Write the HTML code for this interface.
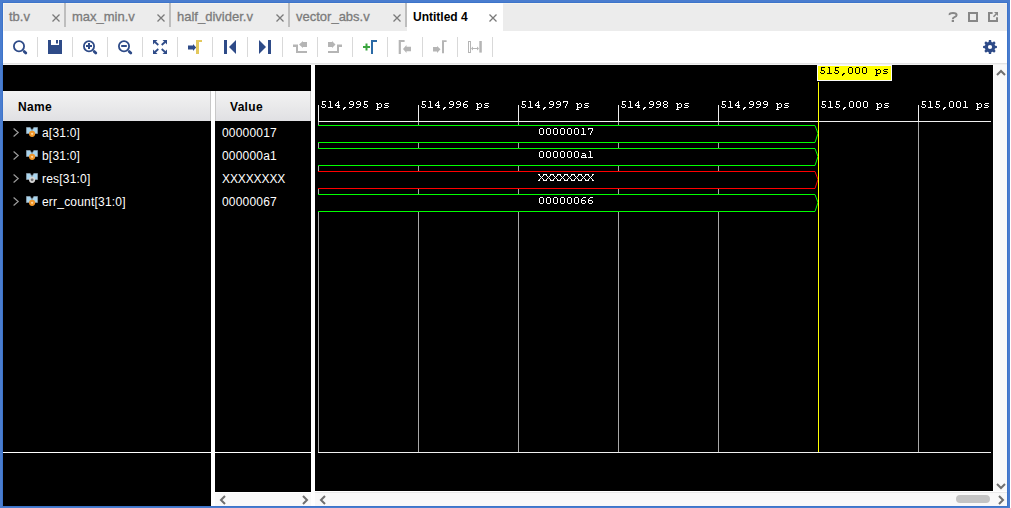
<!DOCTYPE html>
<html><head><meta charset="utf-8">
<style>
*{margin:0;padding:0;box-sizing:border-box}
html,body{width:1011px;height:508px;overflow:hidden;background:#fff}
body{position:relative;font-family:"Liberation Sans",sans-serif}
.a{position:absolute}
#frame{left:0;top:0;width:1010px;height:508px;background:#4a7dcf}
#tabbar{left:3px;top:3px;width:1004px;height:28px;background:#ececec}
.tab{position:absolute;top:3px;height:28px;font-size:13px;color:#7b7b7b;line-height:28px;white-space:pre;-webkit-text-stroke:0.3px #7b7b7b}
.tsep{position:absolute;top:3px;width:2px;height:24px;background:#bebebe}
.x{position:absolute;top:14px;width:8px;height:8px}
#toolbar{left:3px;top:31px;width:1004px;height:32px;background:#fff}
#tbline{left:3px;top:63px;width:1004px;height:2px;background:linear-gradient(#e4e4e4 50%,#f2f2f2 50%)}
.sep{position:absolute;top:37px;width:1px;height:20px;background:#d9d9d9}
.ic{position:absolute;top:40px;width:14px;height:14px}
.blk{position:absolute;background:#000}
.wsep{position:absolute;background:#fff}
.hdr{position:absolute;top:91px;height:30px;background:linear-gradient(#f3f3f3,#e0e0e3);font-weight:bold;font-size:12px;color:#000;line-height:33px;letter-spacing:0.3px}
.row{position:absolute;font-size:12px;color:#fff;white-space:pre;line-height:14px;letter-spacing:0.2px}
.mono{font-family:"Liberation Mono",monospace;font-size:11px;white-space:pre;line-height:14px;position:absolute;letter-spacing:0.4px}
</style></head><body>
<div class="a" id="frame"></div>
<div class="a" style="left:2px;top:2px;width:1006px;height:505px;background:#3d74ca"></div>
<div class="a" id="tabbar"></div>
<div class="a" style="left:3px;top:3px;width:1004px;height:1px;background:#f6f4ee"></div><div class="a" style="left:3px;top:3px;width:1px;height:60px;background:#f8f6f0"></div>
<div class="a" style="left:1010px;top:0;width:1px;height:508px;background:#fff"></div>

<!-- tabs -->
<div class="tab" style="left:9px">tb.v</div>
<svg class="x" style="left:52px" viewBox="0 0 8 8"><path d="M0.5 0.5L7.5 7.5M7.5 0.5L0.5 7.5" stroke="#7a7a7a" stroke-width="1.3"/></svg>
<div class="tsep" style="left:64px"></div>
<div class="tab" style="left:72px">max_min.v</div>
<svg class="x" style="left:157px" viewBox="0 0 8 8"><path d="M0.5 0.5L7.5 7.5M7.5 0.5L0.5 7.5" stroke="#7a7a7a" stroke-width="1.3"/></svg>
<div class="tsep" style="left:169px"></div>
<div class="tab" style="left:177px">half_divider.v</div>
<svg class="x" style="left:276px" viewBox="0 0 8 8"><path d="M0.5 0.5L7.5 7.5M7.5 0.5L0.5 7.5" stroke="#7a7a7a" stroke-width="1.3"/></svg>
<div class="tsep" style="left:288px"></div>
<div class="tab" style="left:296px">vector_abs.v</div>
<svg class="x" style="left:393px" viewBox="0 0 8 8"><path d="M0.5 0.5L7.5 7.5M7.5 0.5L0.5 7.5" stroke="#7a7a7a" stroke-width="1.3"/></svg>
<div class="tsep" style="left:405px"></div>
<div class="a" style="left:407px;top:3px;width:96px;height:28px;background:#fff"></div>
<div class="tab" style="left:413px;font-size:12px;font-weight:bold;color:#000;-webkit-text-stroke:0">Untitled 4</div>
<svg class="x" style="left:489px" viewBox="0 0 8 8"><path d="M0.5 0.5L7.5 7.5M7.5 0.5L0.5 7.5" stroke="#7a7a7a" stroke-width="1.3"/></svg>

<!-- right tab icons -->
<svg class="a" style="left:940px;top:0" width="70" height="30" viewBox="940 0 70 30">
<path d="M949.6 15Q949.3 12.9 953 12.9Q956.6 12.9 956.6 15Q956.6 16.3 954.5 17.2Q952.8 17.9 952.8 19.2" fill="none" stroke="#878787" stroke-width="2"/><rect x="951.7" y="20" width="2.3" height="2" fill="#878787"/>
<rect x="969" y="13" width="8" height="8" fill="none" stroke="#878787" stroke-width="2"/>
<path d="M992.6 13H989V21H997V17.2" fill="none" stroke="#878787" stroke-width="2"/><path d="M993.5 16.8L996.5 13.8" stroke="#878787" stroke-width="1.6"/><path d="M998 12L998 16L994 12Z" fill="#878787"/>
</svg>

<!-- toolbar -->
<div class="a" id="toolbar"></div>
<div class="a" id="tbline"></div>
<div class="sep" style="left:37px"></div><div class="sep" style="left:72px"></div><div class="sep" style="left:107px"></div><div class="sep" style="left:142px"></div><div class="sep" style="left:177px"></div><div class="sep" style="left:212px"></div><div class="sep" style="left:247px"></div><div class="sep" style="left:282px"></div><div class="sep" style="left:317px"></div><div class="sep" style="left:352px"></div><div class="sep" style="left:387px"></div><div class="sep" style="left:422px"></div><div class="sep" style="left:457px"></div><div class="sep" style="left:492px"></div>

<svg class="a" style="left:0;top:0" width="520" height="65" viewBox="0 0 520 65">
<!-- search -->
<circle cx="19" cy="46.2" r="5.1" fill="none" stroke="#2e4b88" stroke-width="1.8"/><path d="M24.2 51.4L25.8 53" stroke="#2e4b88" stroke-width="2.8" stroke-linecap="round"/>
<!-- save -->
<path d="M48 40H51V45H59V40H62V54H48Z" fill="#2e4b88"/><rect x="56" y="40" width="2" height="3.5" fill="#2e4b88"/>
<!-- zoom in -->
<circle cx="89" cy="46.2" r="5.1" fill="none" stroke="#2e4b88" stroke-width="1.8"/><path d="M94.2 51.4L95.8 53" stroke="#2e4b88" stroke-width="2.8" stroke-linecap="round"/>
<path d="M86 45H92V47H86Z M88 43H90V49H88Z" fill="#2e4b88"/>
<!-- zoom out -->
<circle cx="124" cy="46.2" r="5.1" fill="none" stroke="#2e4b88" stroke-width="1.8"/><path d="M129.2 51.4L130.8 53" stroke="#2e4b88" stroke-width="2.8" stroke-linecap="round"/>
<path d="M121.2 45H126.8V47H121.2Z" fill="#2e4b88"/>
<!-- fit -->
<g fill="#2e4b88">
<path d="M153 40H157.5L153 44.5Z"/><path d="M155 42L158.3 45" stroke="#2e4b88" stroke-width="1.8"/>
<path d="M167 40H162.5L167 44.5Z"/><path d="M165 42L161.7 45" stroke="#2e4b88" stroke-width="1.8"/>
<path d="M153 54H157.5L153 49.5Z"/><path d="M155 52L158.3 49" stroke="#2e4b88" stroke-width="1.8"/>
<path d="M167 54H162.5L167 49.5Z"/><path d="M165 52L161.7 49" stroke="#2e4b88" stroke-width="1.8"/>
</g>
<!-- go to cursor -->
<path d="M188 45.5H193V44L196.2 47.5L193 51V49.5H188Z" fill="#2e4b88"/>
<path d="M196 54V40H202V42H199V54Z" fill="#e3c85c"/>
<!-- go to start -->
<rect x="224" y="40" width="3" height="14" fill="#2e4b88"/><path d="M236 40V54L229 47Z" fill="#2e4b88"/>
<!-- go to end -->
<rect x="268" y="40" width="3" height="14" fill="#2e4b88"/><path d="M259 40V54L266 47Z" fill="#2e4b88"/>
<!-- prev transition -->
<path d="M293 44.5H298V51H307V53H296V47H293Z" fill="#b5b5b5"/><path d="M299 44.5L303 41V42H307V47H303V48Z" fill="#b5b5b5"/>
<!-- next transition -->
<path d="M342 44.5H337V51H328V53H339V47H342Z" fill="#b5b5b5"/><path d="M335.5 44.5L332 41V42H328V47H332V48Z" fill="#b5b5b5"/>
<!-- add marker -->
<path d="M363 46H370V48H363Z M365.5 43.5H367.5V50.5H365.5Z" fill="#3aa53e"/>
<path d="M371 54V40H377V42H373V54Z" fill="#2b6aa6"/>
<!-- prev marker -->
<path d="M398.7 54V40H404.6V42H400.9V54Z" fill="#b5b5b5"/><path d="M403 49L406.5 45V46.8H411V51.2H406.5V53Z" fill="#b5b5b5"/>
<!-- next marker -->
<path d="M442 53.2V40.2H446.6V42H444V53.2Z" fill="#b5b5b5"/><path d="M440.5 49.3L437 46V47H433V51.5H437V53Z" fill="#b5b5b5"/>
<!-- swap -->
<rect x="468.5" y="41.5" width="2" height="11" fill="none" stroke="#b5b5b5" stroke-width="1"/>
<rect x="479.3" y="41" width="2.5" height="11.6" fill="#b5b5b5"/>
<path d="M472 48.5H478" stroke="#b5b5b5" stroke-width="1"/><path d="M471 48.5L473 46.5V50.5Z M479 48.5L477 46.5V50.5Z" fill="#b5b5b5"/>
</svg>
<!-- gear -->
<svg class="a" style="left:978px;top:36px" width="24" height="22" viewBox="978 36 24 22"><g fill="#2e4b88"><circle cx="990" cy="47" r="5.2"/><path d="M993.00 45.30L996.90 45.90L996.90 48.10L993.00 48.70ZM993.32 47.92L995.66 51.10L994.10 52.66L990.92 50.32ZM991.70 50.00L991.10 53.90L988.90 53.90L988.30 50.00ZM989.08 50.32L985.90 52.66L984.34 51.10L986.68 47.92ZM987.00 48.70L983.10 48.10L983.10 45.90L987.00 45.30ZM986.68 46.08L984.34 42.90L985.90 41.34L989.08 43.68ZM988.30 44.00L988.90 40.10L991.10 40.10L991.70 44.00ZM990.92 43.68L994.10 41.34L995.66 42.90L993.32 46.08Z"/></g><circle cx="990" cy="47" r="2.1" fill="#fff"/></svg>

<!-- panels -->
<div class="blk" style="left:3px;top:65px;width:208px;height:441px"></div>
<div class="blk" style="left:211px;top:65px;width:4px;height:26px"></div><div class="wsep" style="left:211px;top:91px;width:4px;height:415px"></div>
<div class="blk" style="left:215px;top:65px;width:96px;height:427px"></div>
<div class="wsep" style="left:311px;top:65px;width:4px;height:441px"></div>
<div class="blk" style="left:315px;top:65px;width:678px;height:426px"></div>

<div class="hdr" style="left:3px;width:208px;border-right:1px solid #c8c8c8;padding-left:15px">Name</div>
<div class="hdr" style="left:215px;width:96px;border-left:1px solid #c8c8c8;border-right:1px solid #c8c8c8;padding-left:14px">Value</div>

<div class="a" style="left:3px;top:452px;width:208px;height:1px;background:#fff"></div>
<div class="a" style="left:215px;top:452px;width:96px;height:1px;background:#fff"></div>

<!-- wave -->
<svg class="a" style="left:0;top:0" width="1011" height="508" viewBox="0 0 1011 508" shape-rendering="crispEdges">
<line x1="318.5" y1="121" x2="318.5" y2="452" stroke="#a8a8a8"/>
<line x1="418.5" y1="121" x2="418.5" y2="452" stroke="#a8a8a8"/>
<line x1="518.5" y1="121" x2="518.5" y2="452" stroke="#a8a8a8"/>
<line x1="618.5" y1="121" x2="618.5" y2="452" stroke="#a8a8a8"/>
<line x1="718.5" y1="121" x2="718.5" y2="452" stroke="#a8a8a8"/>
<line x1="918.5" y1="121" x2="918.5" y2="452" stroke="#a8a8a8"/>
<line x1="318.5" y1="105" x2="318.5" y2="122" stroke="#f0f0f0"/>
<line x1="418.5" y1="105" x2="418.5" y2="122" stroke="#f0f0f0"/>
<line x1="518.5" y1="105" x2="518.5" y2="122" stroke="#f0f0f0"/>
<line x1="618.5" y1="105" x2="618.5" y2="122" stroke="#f0f0f0"/>
<line x1="718.5" y1="105" x2="718.5" y2="122" stroke="#f0f0f0"/>
<line x1="918.5" y1="105" x2="918.5" y2="122" stroke="#f0f0f0"/>
<line x1="318" y1="121.5" x2="991" y2="121.5" stroke="#f0f0f0"/>
<line x1="318" y1="452.5" x2="991" y2="452.5" stroke="#f0f0f0"/>
<path d="M318 125H815L818.5 133.5L815 143H318Z" fill="#000"/>
<path d="M318 125.5H815L818 133.5L815 142.5H318" fill="none" stroke="#00ff00" shape-rendering="auto"/>
<path d="M318 148H815L818.5 156.5L815 166H318Z" fill="#000"/>
<path d="M318 148.5H815L818 156.5L815 165.5H318" fill="none" stroke="#00ff00" shape-rendering="auto"/>
<path d="M318 171H815L818.5 179.5L815 189H318Z" fill="#000"/>
<path d="M318 171.5H815L818 179.5L815 188.5H318" fill="none" stroke="#ff0000" shape-rendering="auto"/>
<path d="M318 194H815L818.5 202.5L815 212H318Z" fill="#000"/>
<path d="M318 194.5H815L818 202.5L815 211.5H318" fill="none" stroke="#00ff00" shape-rendering="auto"/>
<line x1="818.5" y1="82" x2="818.5" y2="452" stroke="#ffff00"/>
</svg>
<div class="a" style="left:817px;top:65px;width:75px;height:16px;background:#ffff00;border:1px solid #fafafa"></div>
<svg class="a" style="left:0;top:0" width="1011" height="508" viewBox="0 0 1011 508" shape-rendering="crispEdges"><path fill="#fff" d="M322 101h4v1h-4zM322 102h1v1h-1zM322 103h1v1h-1zM322 104h3v1h-3zM325 105h1v1h-1zM321 106h1v1h-1zM325 106h1v1h-1zM322 107h3v1h-3zM329 101h2v1h-2zM330 102h1v1h-1zM330 103h1v1h-1zM330 104h1v1h-1zM330 105h1v1h-1zM330 106h1v1h-1zM328 107h5v1h-5zM338 101h1v1h-1zM337 102h2v1h-2zM336 103h1v1h-1zM338 103h1v1h-1zM335 104h1v1h-1zM338 104h1v1h-1zM335 105h5v1h-5zM338 106h1v1h-1zM337 107h3v1h-3zM344 107h2v1h-2zM343 108h2v1h-2zM343 109h1v1h-1zM350 101h3v1h-3zM349 102h1v1h-1zM353 102h1v1h-1zM349 103h1v1h-1zM353 103h1v1h-1zM350 104h4v1h-4zM353 105h1v1h-1zM352 106h1v1h-1zM349 107h3v1h-3zM357 101h3v1h-3zM356 102h1v1h-1zM360 102h1v1h-1zM356 103h1v1h-1zM360 103h1v1h-1zM357 104h4v1h-4zM360 105h1v1h-1zM359 106h1v1h-1zM356 107h3v1h-3zM364 101h4v1h-4zM364 102h1v1h-1zM364 103h1v1h-1zM364 104h3v1h-3zM367 105h1v1h-1zM363 106h1v1h-1zM367 106h1v1h-1zM364 107h3v1h-3zM376 103h2v1h-2zM379 103h2v1h-2zM377 104h2v1h-2zM381 104h1v1h-1zM377 105h1v1h-1zM381 105h1v1h-1zM377 106h1v1h-1zM381 106h1v1h-1zM377 107h4v1h-4zM377 108h1v1h-1zM376 109h3v1h-3zM385 103h4v1h-4zM384 104h1v1h-1zM385 105h3v1h-3zM388 106h1v1h-1zM384 107h4v1h-4zM422 101h4v1h-4zM422 102h1v1h-1zM422 103h1v1h-1zM422 104h3v1h-3zM425 105h1v1h-1zM421 106h1v1h-1zM425 106h1v1h-1zM422 107h3v1h-3zM429 101h2v1h-2zM430 102h1v1h-1zM430 103h1v1h-1zM430 104h1v1h-1zM430 105h1v1h-1zM430 106h1v1h-1zM428 107h5v1h-5zM438 101h1v1h-1zM437 102h2v1h-2zM436 103h1v1h-1zM438 103h1v1h-1zM435 104h1v1h-1zM438 104h1v1h-1zM435 105h5v1h-5zM438 106h1v1h-1zM437 107h3v1h-3zM444 107h2v1h-2zM443 108h2v1h-2zM443 109h1v1h-1zM450 101h3v1h-3zM449 102h1v1h-1zM453 102h1v1h-1zM449 103h1v1h-1zM453 103h1v1h-1zM450 104h4v1h-4zM453 105h1v1h-1zM452 106h1v1h-1zM449 107h3v1h-3zM457 101h3v1h-3zM456 102h1v1h-1zM460 102h1v1h-1zM456 103h1v1h-1zM460 103h1v1h-1zM457 104h4v1h-4zM460 105h1v1h-1zM459 106h1v1h-1zM456 107h3v1h-3zM465 101h3v1h-3zM464 102h1v1h-1zM463 103h1v1h-1zM463 104h4v1h-4zM463 105h1v1h-1zM467 105h1v1h-1zM463 106h1v1h-1zM467 106h1v1h-1zM464 107h3v1h-3zM476 103h2v1h-2zM479 103h2v1h-2zM477 104h2v1h-2zM481 104h1v1h-1zM477 105h1v1h-1zM481 105h1v1h-1zM477 106h1v1h-1zM481 106h1v1h-1zM477 107h4v1h-4zM477 108h1v1h-1zM476 109h3v1h-3zM485 103h4v1h-4zM484 104h1v1h-1zM485 105h3v1h-3zM488 106h1v1h-1zM484 107h4v1h-4zM522 101h4v1h-4zM522 102h1v1h-1zM522 103h1v1h-1zM522 104h3v1h-3zM525 105h1v1h-1zM521 106h1v1h-1zM525 106h1v1h-1zM522 107h3v1h-3zM529 101h2v1h-2zM530 102h1v1h-1zM530 103h1v1h-1zM530 104h1v1h-1zM530 105h1v1h-1zM530 106h1v1h-1zM528 107h5v1h-5zM538 101h1v1h-1zM537 102h2v1h-2zM536 103h1v1h-1zM538 103h1v1h-1zM535 104h1v1h-1zM538 104h1v1h-1zM535 105h5v1h-5zM538 106h1v1h-1zM537 107h3v1h-3zM544 107h2v1h-2zM543 108h2v1h-2zM543 109h1v1h-1zM550 101h3v1h-3zM549 102h1v1h-1zM553 102h1v1h-1zM549 103h1v1h-1zM553 103h1v1h-1zM550 104h4v1h-4zM553 105h1v1h-1zM552 106h1v1h-1zM549 107h3v1h-3zM557 101h3v1h-3zM556 102h1v1h-1zM560 102h1v1h-1zM556 103h1v1h-1zM560 103h1v1h-1zM557 104h4v1h-4zM560 105h1v1h-1zM559 106h1v1h-1zM556 107h3v1h-3zM563 101h5v1h-5zM563 102h1v1h-1zM567 102h1v1h-1zM567 103h1v1h-1zM566 104h1v1h-1zM566 105h1v1h-1zM565 106h1v1h-1zM565 107h1v1h-1zM576 103h2v1h-2zM579 103h2v1h-2zM577 104h2v1h-2zM581 104h1v1h-1zM577 105h1v1h-1zM581 105h1v1h-1zM577 106h1v1h-1zM581 106h1v1h-1zM577 107h4v1h-4zM577 108h1v1h-1zM576 109h3v1h-3zM585 103h4v1h-4zM584 104h1v1h-1zM585 105h3v1h-3zM588 106h1v1h-1zM584 107h4v1h-4zM622 101h4v1h-4zM622 102h1v1h-1zM622 103h1v1h-1zM622 104h3v1h-3zM625 105h1v1h-1zM621 106h1v1h-1zM625 106h1v1h-1zM622 107h3v1h-3zM629 101h2v1h-2zM630 102h1v1h-1zM630 103h1v1h-1zM630 104h1v1h-1zM630 105h1v1h-1zM630 106h1v1h-1zM628 107h5v1h-5zM638 101h1v1h-1zM637 102h2v1h-2zM636 103h1v1h-1zM638 103h1v1h-1zM635 104h1v1h-1zM638 104h1v1h-1zM635 105h5v1h-5zM638 106h1v1h-1zM637 107h3v1h-3zM644 107h2v1h-2zM643 108h2v1h-2zM643 109h1v1h-1zM650 101h3v1h-3zM649 102h1v1h-1zM653 102h1v1h-1zM649 103h1v1h-1zM653 103h1v1h-1zM650 104h4v1h-4zM653 105h1v1h-1zM652 106h1v1h-1zM649 107h3v1h-3zM657 101h3v1h-3zM656 102h1v1h-1zM660 102h1v1h-1zM656 103h1v1h-1zM660 103h1v1h-1zM657 104h4v1h-4zM660 105h1v1h-1zM659 106h1v1h-1zM656 107h3v1h-3zM664 101h3v1h-3zM663 102h1v1h-1zM667 102h1v1h-1zM663 103h1v1h-1zM667 103h1v1h-1zM664 104h3v1h-3zM663 105h1v1h-1zM667 105h1v1h-1zM663 106h1v1h-1zM667 106h1v1h-1zM664 107h3v1h-3zM676 103h2v1h-2zM679 103h2v1h-2zM677 104h2v1h-2zM681 104h1v1h-1zM677 105h1v1h-1zM681 105h1v1h-1zM677 106h1v1h-1zM681 106h1v1h-1zM677 107h4v1h-4zM677 108h1v1h-1zM676 109h3v1h-3zM685 103h4v1h-4zM684 104h1v1h-1zM685 105h3v1h-3zM688 106h1v1h-1zM684 107h4v1h-4zM722 101h4v1h-4zM722 102h1v1h-1zM722 103h1v1h-1zM722 104h3v1h-3zM725 105h1v1h-1zM721 106h1v1h-1zM725 106h1v1h-1zM722 107h3v1h-3zM729 101h2v1h-2zM730 102h1v1h-1zM730 103h1v1h-1zM730 104h1v1h-1zM730 105h1v1h-1zM730 106h1v1h-1zM728 107h5v1h-5zM738 101h1v1h-1zM737 102h2v1h-2zM736 103h1v1h-1zM738 103h1v1h-1zM735 104h1v1h-1zM738 104h1v1h-1zM735 105h5v1h-5zM738 106h1v1h-1zM737 107h3v1h-3zM744 107h2v1h-2zM743 108h2v1h-2zM743 109h1v1h-1zM750 101h3v1h-3zM749 102h1v1h-1zM753 102h1v1h-1zM749 103h1v1h-1zM753 103h1v1h-1zM750 104h4v1h-4zM753 105h1v1h-1zM752 106h1v1h-1zM749 107h3v1h-3zM757 101h3v1h-3zM756 102h1v1h-1zM760 102h1v1h-1zM756 103h1v1h-1zM760 103h1v1h-1zM757 104h4v1h-4zM760 105h1v1h-1zM759 106h1v1h-1zM756 107h3v1h-3zM764 101h3v1h-3zM763 102h1v1h-1zM767 102h1v1h-1zM763 103h1v1h-1zM767 103h1v1h-1zM764 104h4v1h-4zM767 105h1v1h-1zM766 106h1v1h-1zM763 107h3v1h-3zM776 103h2v1h-2zM779 103h2v1h-2zM777 104h2v1h-2zM781 104h1v1h-1zM777 105h1v1h-1zM781 105h1v1h-1zM777 106h1v1h-1zM781 106h1v1h-1zM777 107h4v1h-4zM777 108h1v1h-1zM776 109h3v1h-3zM785 103h4v1h-4zM784 104h1v1h-1zM785 105h3v1h-3zM788 106h1v1h-1zM784 107h4v1h-4zM822 101h4v1h-4zM822 102h1v1h-1zM822 103h1v1h-1zM822 104h3v1h-3zM825 105h1v1h-1zM821 106h1v1h-1zM825 106h1v1h-1zM822 107h3v1h-3zM829 101h2v1h-2zM830 102h1v1h-1zM830 103h1v1h-1zM830 104h1v1h-1zM830 105h1v1h-1zM830 106h1v1h-1zM828 107h5v1h-5zM836 101h4v1h-4zM836 102h1v1h-1zM836 103h1v1h-1zM836 104h3v1h-3zM839 105h1v1h-1zM835 106h1v1h-1zM839 106h1v1h-1zM836 107h3v1h-3zM844 107h2v1h-2zM843 108h2v1h-2zM843 109h1v1h-1zM850 101h3v1h-3zM849 102h1v1h-1zM853 102h1v1h-1zM849 103h1v1h-1zM853 103h1v1h-1zM849 104h1v1h-1zM853 104h1v1h-1zM849 105h1v1h-1zM853 105h1v1h-1zM849 106h1v1h-1zM853 106h1v1h-1zM850 107h3v1h-3zM857 101h3v1h-3zM856 102h1v1h-1zM860 102h1v1h-1zM856 103h1v1h-1zM860 103h1v1h-1zM856 104h1v1h-1zM860 104h1v1h-1zM856 105h1v1h-1zM860 105h1v1h-1zM856 106h1v1h-1zM860 106h1v1h-1zM857 107h3v1h-3zM864 101h3v1h-3zM863 102h1v1h-1zM867 102h1v1h-1zM863 103h1v1h-1zM867 103h1v1h-1zM863 104h1v1h-1zM867 104h1v1h-1zM863 105h1v1h-1zM867 105h1v1h-1zM863 106h1v1h-1zM867 106h1v1h-1zM864 107h3v1h-3zM876 103h2v1h-2zM879 103h2v1h-2zM877 104h2v1h-2zM881 104h1v1h-1zM877 105h1v1h-1zM881 105h1v1h-1zM877 106h1v1h-1zM881 106h1v1h-1zM877 107h4v1h-4zM877 108h1v1h-1zM876 109h3v1h-3zM885 103h4v1h-4zM884 104h1v1h-1zM885 105h3v1h-3zM888 106h1v1h-1zM884 107h4v1h-4zM922 101h4v1h-4zM922 102h1v1h-1zM922 103h1v1h-1zM922 104h3v1h-3zM925 105h1v1h-1zM921 106h1v1h-1zM925 106h1v1h-1zM922 107h3v1h-3zM929 101h2v1h-2zM930 102h1v1h-1zM930 103h1v1h-1zM930 104h1v1h-1zM930 105h1v1h-1zM930 106h1v1h-1zM928 107h5v1h-5zM936 101h4v1h-4zM936 102h1v1h-1zM936 103h1v1h-1zM936 104h3v1h-3zM939 105h1v1h-1zM935 106h1v1h-1zM939 106h1v1h-1zM936 107h3v1h-3zM944 107h2v1h-2zM943 108h2v1h-2zM943 109h1v1h-1zM950 101h3v1h-3zM949 102h1v1h-1zM953 102h1v1h-1zM949 103h1v1h-1zM953 103h1v1h-1zM949 104h1v1h-1zM953 104h1v1h-1zM949 105h1v1h-1zM953 105h1v1h-1zM949 106h1v1h-1zM953 106h1v1h-1zM950 107h3v1h-3zM957 101h3v1h-3zM956 102h1v1h-1zM960 102h1v1h-1zM956 103h1v1h-1zM960 103h1v1h-1zM956 104h1v1h-1zM960 104h1v1h-1zM956 105h1v1h-1zM960 105h1v1h-1zM956 106h1v1h-1zM960 106h1v1h-1zM957 107h3v1h-3zM964 101h2v1h-2zM965 102h1v1h-1zM965 103h1v1h-1zM965 104h1v1h-1zM965 105h1v1h-1zM965 106h1v1h-1zM963 107h5v1h-5zM976 103h2v1h-2zM979 103h2v1h-2zM977 104h2v1h-2zM981 104h1v1h-1zM977 105h1v1h-1zM981 105h1v1h-1zM977 106h1v1h-1zM981 106h1v1h-1zM977 107h4v1h-4zM977 108h1v1h-1zM976 109h3v1h-3zM985 103h4v1h-4zM984 104h1v1h-1zM985 105h3v1h-3zM988 106h1v1h-1zM984 107h4v1h-4zM540 128h3v1h-3zM539 129h1v1h-1zM543 129h1v1h-1zM539 130h1v1h-1zM543 130h1v1h-1zM539 131h1v1h-1zM543 131h1v1h-1zM539 132h1v1h-1zM543 132h1v1h-1zM539 133h1v1h-1zM543 133h1v1h-1zM540 134h3v1h-3zM547 128h3v1h-3zM546 129h1v1h-1zM550 129h1v1h-1zM546 130h1v1h-1zM550 130h1v1h-1zM546 131h1v1h-1zM550 131h1v1h-1zM546 132h1v1h-1zM550 132h1v1h-1zM546 133h1v1h-1zM550 133h1v1h-1zM547 134h3v1h-3zM554 128h3v1h-3zM553 129h1v1h-1zM557 129h1v1h-1zM553 130h1v1h-1zM557 130h1v1h-1zM553 131h1v1h-1zM557 131h1v1h-1zM553 132h1v1h-1zM557 132h1v1h-1zM553 133h1v1h-1zM557 133h1v1h-1zM554 134h3v1h-3zM561 128h3v1h-3zM560 129h1v1h-1zM564 129h1v1h-1zM560 130h1v1h-1zM564 130h1v1h-1zM560 131h1v1h-1zM564 131h1v1h-1zM560 132h1v1h-1zM564 132h1v1h-1zM560 133h1v1h-1zM564 133h1v1h-1zM561 134h3v1h-3zM568 128h3v1h-3zM567 129h1v1h-1zM571 129h1v1h-1zM567 130h1v1h-1zM571 130h1v1h-1zM567 131h1v1h-1zM571 131h1v1h-1zM567 132h1v1h-1zM571 132h1v1h-1zM567 133h1v1h-1zM571 133h1v1h-1zM568 134h3v1h-3zM575 128h3v1h-3zM574 129h1v1h-1zM578 129h1v1h-1zM574 130h1v1h-1zM578 130h1v1h-1zM574 131h1v1h-1zM578 131h1v1h-1zM574 132h1v1h-1zM578 132h1v1h-1zM574 133h1v1h-1zM578 133h1v1h-1zM575 134h3v1h-3zM582 128h2v1h-2zM583 129h1v1h-1zM583 130h1v1h-1zM583 131h1v1h-1zM583 132h1v1h-1zM583 133h1v1h-1zM581 134h5v1h-5zM588 128h5v1h-5zM588 129h1v1h-1zM592 129h1v1h-1zM592 130h1v1h-1zM591 131h1v1h-1zM591 132h1v1h-1zM590 133h1v1h-1zM590 134h1v1h-1zM540 151h3v1h-3zM539 152h1v1h-1zM543 152h1v1h-1zM539 153h1v1h-1zM543 153h1v1h-1zM539 154h1v1h-1zM543 154h1v1h-1zM539 155h1v1h-1zM543 155h1v1h-1zM539 156h1v1h-1zM543 156h1v1h-1zM540 157h3v1h-3zM547 151h3v1h-3zM546 152h1v1h-1zM550 152h1v1h-1zM546 153h1v1h-1zM550 153h1v1h-1zM546 154h1v1h-1zM550 154h1v1h-1zM546 155h1v1h-1zM550 155h1v1h-1zM546 156h1v1h-1zM550 156h1v1h-1zM547 157h3v1h-3zM554 151h3v1h-3zM553 152h1v1h-1zM557 152h1v1h-1zM553 153h1v1h-1zM557 153h1v1h-1zM553 154h1v1h-1zM557 154h1v1h-1zM553 155h1v1h-1zM557 155h1v1h-1zM553 156h1v1h-1zM557 156h1v1h-1zM554 157h3v1h-3zM561 151h3v1h-3zM560 152h1v1h-1zM564 152h1v1h-1zM560 153h1v1h-1zM564 153h1v1h-1zM560 154h1v1h-1zM564 154h1v1h-1zM560 155h1v1h-1zM564 155h1v1h-1zM560 156h1v1h-1zM564 156h1v1h-1zM561 157h3v1h-3zM568 151h3v1h-3zM567 152h1v1h-1zM571 152h1v1h-1zM567 153h1v1h-1zM571 153h1v1h-1zM567 154h1v1h-1zM571 154h1v1h-1zM567 155h1v1h-1zM571 155h1v1h-1zM567 156h1v1h-1zM571 156h1v1h-1zM568 157h3v1h-3zM575 151h3v1h-3zM574 152h1v1h-1zM578 152h1v1h-1zM574 153h1v1h-1zM578 153h1v1h-1zM574 154h1v1h-1zM578 154h1v1h-1zM574 155h1v1h-1zM578 155h1v1h-1zM574 156h1v1h-1zM578 156h1v1h-1zM575 157h3v1h-3zM582 153h3v1h-3zM585 154h1v1h-1zM582 155h4v1h-4zM581 156h1v1h-1zM585 156h1v1h-1zM581 157h6v1h-6zM589 151h2v1h-2zM590 152h1v1h-1zM590 153h1v1h-1zM590 154h1v1h-1zM590 155h1v1h-1zM590 156h1v1h-1zM588 157h5v1h-5zM538 174h2v1h-2zM543 174h2v1h-2zM539 175h1v1h-1zM543 175h1v1h-1zM540 176h1v1h-1zM542 176h1v1h-1zM541 177h1v1h-1zM540 178h1v1h-1zM542 178h1v1h-1zM539 179h1v1h-1zM543 179h1v1h-1zM538 180h2v1h-2zM543 180h2v1h-2zM545 174h2v1h-2zM550 174h2v1h-2zM546 175h1v1h-1zM550 175h1v1h-1zM547 176h1v1h-1zM549 176h1v1h-1zM548 177h1v1h-1zM547 178h1v1h-1zM549 178h1v1h-1zM546 179h1v1h-1zM550 179h1v1h-1zM545 180h2v1h-2zM550 180h2v1h-2zM552 174h2v1h-2zM557 174h2v1h-2zM553 175h1v1h-1zM557 175h1v1h-1zM554 176h1v1h-1zM556 176h1v1h-1zM555 177h1v1h-1zM554 178h1v1h-1zM556 178h1v1h-1zM553 179h1v1h-1zM557 179h1v1h-1zM552 180h2v1h-2zM557 180h2v1h-2zM559 174h2v1h-2zM564 174h2v1h-2zM560 175h1v1h-1zM564 175h1v1h-1zM561 176h1v1h-1zM563 176h1v1h-1zM562 177h1v1h-1zM561 178h1v1h-1zM563 178h1v1h-1zM560 179h1v1h-1zM564 179h1v1h-1zM559 180h2v1h-2zM564 180h2v1h-2zM566 174h2v1h-2zM571 174h2v1h-2zM567 175h1v1h-1zM571 175h1v1h-1zM568 176h1v1h-1zM570 176h1v1h-1zM569 177h1v1h-1zM568 178h1v1h-1zM570 178h1v1h-1zM567 179h1v1h-1zM571 179h1v1h-1zM566 180h2v1h-2zM571 180h2v1h-2zM573 174h2v1h-2zM578 174h2v1h-2zM574 175h1v1h-1zM578 175h1v1h-1zM575 176h1v1h-1zM577 176h1v1h-1zM576 177h1v1h-1zM575 178h1v1h-1zM577 178h1v1h-1zM574 179h1v1h-1zM578 179h1v1h-1zM573 180h2v1h-2zM578 180h2v1h-2zM580 174h2v1h-2zM585 174h2v1h-2zM581 175h1v1h-1zM585 175h1v1h-1zM582 176h1v1h-1zM584 176h1v1h-1zM583 177h1v1h-1zM582 178h1v1h-1zM584 178h1v1h-1zM581 179h1v1h-1zM585 179h1v1h-1zM580 180h2v1h-2zM585 180h2v1h-2zM587 174h2v1h-2zM592 174h2v1h-2zM588 175h1v1h-1zM592 175h1v1h-1zM589 176h1v1h-1zM591 176h1v1h-1zM590 177h1v1h-1zM589 178h1v1h-1zM591 178h1v1h-1zM588 179h1v1h-1zM592 179h1v1h-1zM587 180h2v1h-2zM592 180h2v1h-2zM540 197h3v1h-3zM539 198h1v1h-1zM543 198h1v1h-1zM539 199h1v1h-1zM543 199h1v1h-1zM539 200h1v1h-1zM543 200h1v1h-1zM539 201h1v1h-1zM543 201h1v1h-1zM539 202h1v1h-1zM543 202h1v1h-1zM540 203h3v1h-3zM547 197h3v1h-3zM546 198h1v1h-1zM550 198h1v1h-1zM546 199h1v1h-1zM550 199h1v1h-1zM546 200h1v1h-1zM550 200h1v1h-1zM546 201h1v1h-1zM550 201h1v1h-1zM546 202h1v1h-1zM550 202h1v1h-1zM547 203h3v1h-3zM554 197h3v1h-3zM553 198h1v1h-1zM557 198h1v1h-1zM553 199h1v1h-1zM557 199h1v1h-1zM553 200h1v1h-1zM557 200h1v1h-1zM553 201h1v1h-1zM557 201h1v1h-1zM553 202h1v1h-1zM557 202h1v1h-1zM554 203h3v1h-3zM561 197h3v1h-3zM560 198h1v1h-1zM564 198h1v1h-1zM560 199h1v1h-1zM564 199h1v1h-1zM560 200h1v1h-1zM564 200h1v1h-1zM560 201h1v1h-1zM564 201h1v1h-1zM560 202h1v1h-1zM564 202h1v1h-1zM561 203h3v1h-3zM568 197h3v1h-3zM567 198h1v1h-1zM571 198h1v1h-1zM567 199h1v1h-1zM571 199h1v1h-1zM567 200h1v1h-1zM571 200h1v1h-1zM567 201h1v1h-1zM571 201h1v1h-1zM567 202h1v1h-1zM571 202h1v1h-1zM568 203h3v1h-3zM575 197h3v1h-3zM574 198h1v1h-1zM578 198h1v1h-1zM574 199h1v1h-1zM578 199h1v1h-1zM574 200h1v1h-1zM578 200h1v1h-1zM574 201h1v1h-1zM578 201h1v1h-1zM574 202h1v1h-1zM578 202h1v1h-1zM575 203h3v1h-3zM583 197h3v1h-3zM582 198h1v1h-1zM581 199h1v1h-1zM581 200h4v1h-4zM581 201h1v1h-1zM585 201h1v1h-1zM581 202h1v1h-1zM585 202h1v1h-1zM582 203h3v1h-3zM590 197h3v1h-3zM589 198h1v1h-1zM588 199h1v1h-1zM588 200h4v1h-4zM588 201h1v1h-1zM592 201h1v1h-1zM588 202h1v1h-1zM592 202h1v1h-1zM589 203h3v1h-3z"/><path fill="#000" d="M821 67h4v1h-4zM821 68h1v1h-1zM821 69h1v1h-1zM821 70h3v1h-3zM824 71h1v1h-1zM820 72h1v1h-1zM824 72h1v1h-1zM821 73h3v1h-3zM828 67h2v1h-2zM829 68h1v1h-1zM829 69h1v1h-1zM829 70h1v1h-1zM829 71h1v1h-1zM829 72h1v1h-1zM827 73h5v1h-5zM835 67h4v1h-4zM835 68h1v1h-1zM835 69h1v1h-1zM835 70h3v1h-3zM838 71h1v1h-1zM834 72h1v1h-1zM838 72h1v1h-1zM835 73h3v1h-3zM843 73h2v1h-2zM842 74h2v1h-2zM842 75h1v1h-1zM849 67h3v1h-3zM848 68h1v1h-1zM852 68h1v1h-1zM848 69h1v1h-1zM852 69h1v1h-1zM848 70h1v1h-1zM852 70h1v1h-1zM848 71h1v1h-1zM852 71h1v1h-1zM848 72h1v1h-1zM852 72h1v1h-1zM849 73h3v1h-3zM856 67h3v1h-3zM855 68h1v1h-1zM859 68h1v1h-1zM855 69h1v1h-1zM859 69h1v1h-1zM855 70h1v1h-1zM859 70h1v1h-1zM855 71h1v1h-1zM859 71h1v1h-1zM855 72h1v1h-1zM859 72h1v1h-1zM856 73h3v1h-3zM863 67h3v1h-3zM862 68h1v1h-1zM866 68h1v1h-1zM862 69h1v1h-1zM866 69h1v1h-1zM862 70h1v1h-1zM866 70h1v1h-1zM862 71h1v1h-1zM866 71h1v1h-1zM862 72h1v1h-1zM866 72h1v1h-1zM863 73h3v1h-3zM875 69h2v1h-2zM878 69h2v1h-2zM876 70h2v1h-2zM880 70h1v1h-1zM876 71h1v1h-1zM880 71h1v1h-1zM876 72h1v1h-1zM880 72h1v1h-1zM876 73h4v1h-4zM876 74h1v1h-1zM875 75h3v1h-3zM884 69h4v1h-4zM883 70h1v1h-1zM884 71h3v1h-3zM887 72h1v1h-1zM883 73h4v1h-4z"/></svg>
<!-- rows -->
<svg class="a" style="left:12px;top:127px" width="8" height="11" viewBox="0 0 8 11"><path d="M1.6 1.5L6.2 5.5L1.6 9.5" fill="none" stroke="#9a9a9a" stroke-width="1.2"/></svg>
<svg class="a" style="left:26px;top:127px" width="12" height="11" viewBox="0 0 12 11" overflow="visible"><path d="M0.5 0.5H4.2L6 3.5L7.8 0.5H11.5V6.5H0.5Z" fill="#a9d5ee" stroke="#8a9cab" stroke-width="0.8"/><circle cx="6.1" cy="6.8" r="3.1" fill="#f0962a"/><circle cx="6.1" cy="6.8" r="1.1" fill="#ffd49a"/></svg>
<div class="row" style="left:42px;top:126px">a[31:0]</div>
<div class="row" style="left:222px;top:126px">00000017</div>
<svg class="a" style="left:12px;top:150px" width="8" height="11" viewBox="0 0 8 11"><path d="M1.6 1.5L6.2 5.5L1.6 9.5" fill="none" stroke="#9a9a9a" stroke-width="1.2"/></svg>
<svg class="a" style="left:26px;top:150px" width="12" height="11" viewBox="0 0 12 11" overflow="visible"><path d="M0.5 0.5H4.2L6 3.5L7.8 0.5H11.5V6.5H0.5Z" fill="#a9d5ee" stroke="#8a9cab" stroke-width="0.8"/><circle cx="6.1" cy="6.8" r="3.1" fill="#f0962a"/><circle cx="6.1" cy="6.8" r="1.1" fill="#ffd49a"/></svg>
<div class="row" style="left:42px;top:149px">b[31:0]</div>
<div class="row" style="left:222px;top:149px">000000a1</div>
<svg class="a" style="left:12px;top:173px" width="8" height="11" viewBox="0 0 8 11"><path d="M1.6 1.5L6.2 5.5L1.6 9.5" fill="none" stroke="#9a9a9a" stroke-width="1.2"/></svg>
<svg class="a" style="left:26px;top:173px" width="12" height="11" viewBox="0 0 12 11" overflow="visible"><path d="M0.5 0.5H4.2L6 3.5L7.8 0.5H11.5V6.5H0.5Z" fill="#a9d5ee" stroke="#8a9cab" stroke-width="0.8"/><circle cx="6.1" cy="6.8" r="3.1" fill="#d6d6d6"/><circle cx="6.1" cy="6.8" r="1.4" fill="#6e6e6e"/></svg>
<div class="row" style="left:42px;top:172px">res[31:0]</div>
<div class="row" style="left:222px;top:172px;letter-spacing:-0.1px">XXXXXXXX</div>
<svg class="a" style="left:12px;top:196px" width="8" height="11" viewBox="0 0 8 11"><path d="M1.6 1.5L6.2 5.5L1.6 9.5" fill="none" stroke="#9a9a9a" stroke-width="1.2"/></svg>
<svg class="a" style="left:26px;top:196px" width="12" height="11" viewBox="0 0 12 11" overflow="visible"><path d="M0.5 0.5H4.2L6 3.5L7.8 0.5H11.5V6.5H0.5Z" fill="#a9d5ee" stroke="#8a9cab" stroke-width="0.8"/><circle cx="6.1" cy="6.8" r="3.1" fill="#f0962a"/><circle cx="6.1" cy="6.8" r="1.1" fill="#ffd49a"/></svg>
<div class="row" style="left:42px;top:195px">err_count[31:0]</div>
<div class="row" style="left:222px;top:195px">00000067</div>
<div class="a" style="left:215px;top:492px;width:96px;height:14px;background:#f9f9f9"></div>
<div class="a" style="left:315px;top:492px;width:692px;height:14px;background:#f9f9f9"></div>
<div class="a" style="left:993px;top:65px;width:14px;height:427px;background:#f9f9f9"></div>
<div class="a" style="left:315px;top:491px;width:692px;height:1px;background:#fff"></div><div class="a" style="left:315px;top:492px;width:692px;height:1px;background:#e9e9e9"></div><div class="a" style="left:215px;top:492px;width:96px;height:1px;background:#fff"></div><div class="a" style="left:993px;top:65px;width:1px;height:426px;background:#fff"></div>
<div class="a" style="left:956px;top:495px;width:34px;height:8px;border-radius:4px;background:#c4c4c4"></div>
<svg class="a" style="left:219px;top:495px" width="10" height="10" viewBox="0 0 10 10"><path d="M6 1L2 5L6 9" fill="none" stroke="#6f6f6f" stroke-width="2"/></svg>
<svg class="a" style="left:300px;top:495px" width="10" height="10" viewBox="0 0 10 10"><path d="M3 1L7 5L3 9" fill="none" stroke="#6f6f6f" stroke-width="2"/></svg>
<svg class="a" style="left:319px;top:495px" width="10" height="10" viewBox="0 0 10 10"><path d="M6 1L2 5L6 9" fill="none" stroke="#6f6f6f" stroke-width="2"/></svg>
<svg class="a" style="left:996px;top:495px" width="10" height="10" viewBox="0 0 10 10"><path d="M3 1L7 5L3 9" fill="none" stroke="#6f6f6f" stroke-width="2"/></svg>
<svg class="a" style="left:996px;top:68px" width="10" height="10" viewBox="0 0 10 10"><path d="M1 7L5 3L9 7" fill="none" stroke="#6f6f6f" stroke-width="2"/></svg>
<svg class="a" style="left:996px;top:481px" width="10" height="10" viewBox="0 0 10 10"><path d="M1 3L5 7L9 3" fill="none" stroke="#6f6f6f" stroke-width="2"/></svg>
</body></html>
